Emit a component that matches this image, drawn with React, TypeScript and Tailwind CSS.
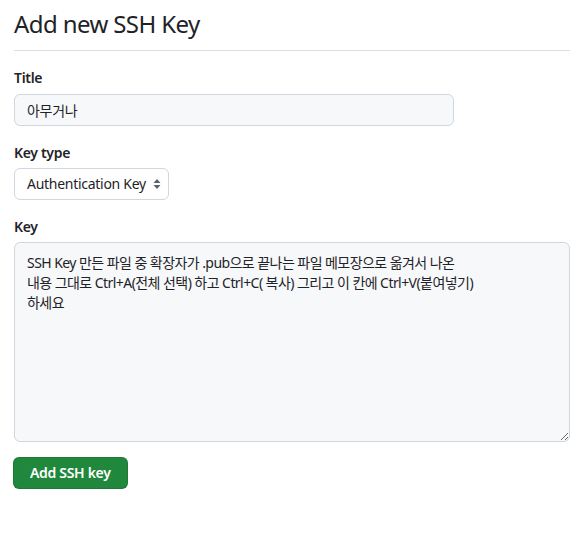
import { useState } from "react";

const keyText =
  "SSH Key 만든 파일 중 확장자가 .pub으로 끝나는 파일 메모장으로 옮겨서 나온\n내용 그대로 Ctrl+A(전체 선택) 하고 Ctrl+C( 복사) 그리고 이 칸에 Ctrl+V(붙여넣기)\n하세요";

export default function App() {
  const [title, setTitle] = useState("아무거나");
  const [keyType, setKeyType] = useState("authentication");
  const [key, setKey] = useState(keyText);

  return (
    <div className="min-h-screen bg-white text-[#1f2328] tracking-[-0.02em] font-['Noto_Sans','Noto_Sans_CJK_KR',sans-serif]">
      <div className="pl-[14px] pr-[15px] pt-[6px]">
        <div className="border-b border-[#d8dee4] pb-2 mb-4">
          <h2 className="text-2xl leading-9 font-normal tracking-[-0.025em]">Add new SSH Key</h2>
        </div>

        <form onSubmit={(e) => e.preventDefault()}>
          <div>
            <label className="block text-sm leading-[21px] font-semibold mb-1.5">
              Title
            </label>
            <input
              value={title}
              onChange={(e) => setTitle(e.target.value)}
              className="w-[440px] h-8 px-3 text-sm tracking-[-0.02em] rounded-md border border-[#d0d7de] bg-[#f6f8fa] outline-none"
            />
          </div>

          <div className="mt-4">
            <label className="block text-sm leading-[21px] font-semibold mb-[5px]">
              Key type
            </label>
            <div className="relative w-[155px]">
              <select
                value={keyType}
                onChange={(e) => setKeyType(e.target.value)}
                className="appearance-none w-full h-8 pl-3 pr-5 text-sm tracking-[-0.02em] rounded-md border border-[#d0d7de] bg-white outline-none"
              >
                <option value="authentication">Authentication Key</option>
                <option value="signing">Signing Key</option>
              </select>
              <svg
                className="pointer-events-none absolute right-[8px] top-[10px]"
                width="8"
                height="12"
                viewBox="0 0 8 12"
              >
                <path d="M4 1 L7.5 5 H0.5 Z M4 11 L0.5 7 H7.5 Z" fill="#59636e" />
              </svg>
            </div>
          </div>

          <div className="mt-4">
            <label className="block text-sm leading-[21px] font-semibold mb-[5px]">
              Key
            </label>
            <textarea
              value={key}
              onChange={(e) => setKey(e.target.value)}
              className="block w-full h-[200px] px-3 pt-[10px] pb-2 text-sm leading-5 tracking-[-0.04em] rounded-md border border-[#d0d7de] bg-[#f6f8fa] outline-none resize-y"
            />
          </div>

          <button
            type="submit"
            className="mt-[15px] ml-[-1px] h-8 px-4 rounded-md bg-[#1f883d] border border-[rgba(31,35,40,0.15)] text-white text-sm font-semibold"
          >
            Add SSH key
          </button>
        </form>
      </div>
    </div>
  );
}
